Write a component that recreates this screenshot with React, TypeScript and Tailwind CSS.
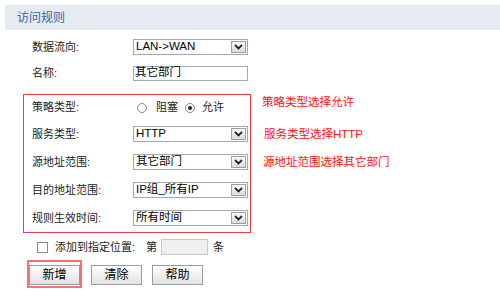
import type { ReactNode } from 'react';

const FONT = { fontFamily: '"Liberation Sans", "Noto Sans CJK SC", sans-serif' };

function FakeSelect({ value }: { value: string }) {
  return (
    <div className="w-[115px] h-[16px] border border-[#a3a9b1] bg-white flex items-center justify-between">
      <span className="pl-[2px] text-[11.5px] leading-none text-black">{value}</span>
      <span className="mr-[1px] w-[15px] h-[12px] border border-[#9aa1aa] bg-gradient-to-b from-[#fafafa] to-[#dcdcdc] flex items-center justify-center">
        <svg width="9" height="6" viewBox="0 0 9 6">
          <path d="M1 1 L4.5 4.5 L8 1" fill="none" stroke="#1c2638" strokeWidth="1.8" />
        </svg>
      </span>
    </div>
  );
}

function Row({ label, h, children }: { label: string; h: string; children: ReactNode }) {
  return (
    <div className={`flex items-center ${h}`}>
      <span className="w-[101px] text-[11px] text-[#222]">{label}</span>
      {children}
    </div>
  );
}

function Radio({ checked }: { checked?: boolean }) {
  return (
    <span className="w-[10px] h-[10px] rounded-full border border-[#8a8a8a] bg-white flex items-center justify-center">
      {checked && <span className="w-[4px] h-[4px] rounded-full bg-[#222]" />}
    </span>
  );
}

function Btn({ children }: { children: ReactNode }) {
  return (
    <button className="w-[51px] h-[20px] border border-[#9c9c9c] bg-gradient-to-b from-white to-[#e2e2e2] text-[12px] text-black leading-none">
      {children}
    </button>
  );
}

export default function App() {
  return (
    <div className="w-[500px] h-[295px] bg-white overflow-hidden" style={FONT}>
      <div className="ml-[5px] mt-[5px] h-[25px] bg-[#e5ebf1] flex items-center pl-[12px] text-[12px] text-[#2f69a6]">
        访问规则
      </div>

      <div className="pl-[23px] pt-[3px]">
        <div className="pl-[9px]">
          <Row label="数据流向:" h="h-[28px]">
            <FakeSelect value="LAN->WAN" />
          </Row>
          <Row label="名称:" h="h-[24px]">
            <div className="w-[115px] h-[15px] border border-[#a3a9b1] bg-white flex items-center pl-[1px] text-[11.5px] leading-none text-black">
              其它部门
            </div>
          </Row>
        </div>

        <div className="flex mt-[9px]">
          <div className="w-[228px] border border-[#ee3b3b] pl-[8px]">
            <Row label="策略类型:" h="h-[25px]">
              <div className="flex items-center text-[11px] text-[#222]">
                <span className="ml-[4px]"><Radio /></span>
                <span className="ml-[9px]">阻塞</span>
                <span className="ml-[7px]"><Radio checked /></span>
                <span className="ml-[7px]">允许</span>
              </div>
            </Row>
            <Row label="服务类型:" h="h-[28px]">
              <FakeSelect value="HTTP" />
            </Row>
            <Row label="源地址范围:" h="h-[28px]">
              <FakeSelect value="其它部门" />
            </Row>
            <Row label="目的地址范围:" h="h-[28px]">
              <FakeSelect value="IP组_所有IP" />
            </Row>
            <Row label="规则生效时间:" h="h-[28px]">
              <FakeSelect value="所有时间" />
            </Row>
          </div>

          <div className="ml-[11px] pt-[1px] text-[11.5px] text-[#ff1010] leading-[14px]">
            <p>策略类型选择允许</p>
            <p className="mt-[18px] ml-[2px]">服务类型选择HTTP</p>
            <p className="mt-[14px] ml-[1px]">源地址范围选择其它部门</p>
          </div>
        </div>

        <div className="h-[28px] flex items-center pl-[14px] text-[11px] text-[#222]">
          <span className="w-[11px] h-[11px] border border-[#8a8a8a] bg-white" />
          <span className="ml-[7px]">添加到指定位置:</span>
          <span className="ml-[11px]">第</span>
          <span className="ml-[4px] w-[47px] h-[16px] border border-[#c8c8c8] bg-[#f0f0f0]" />
          <span className="ml-[5px]">条</span>
        </div>

        <div className="h-[26px] flex items-center pl-[4px]">
          <div className="border-2 border-[#f07272] p-0">
            <Btn>新增</Btn>
          </div>
          <span className="ml-[9px]"><Btn>清除</Btn></span>
          <span className="ml-[10px]"><Btn>帮助</Btn></span>
        </div>
      </div>
    </div>
  );
}
